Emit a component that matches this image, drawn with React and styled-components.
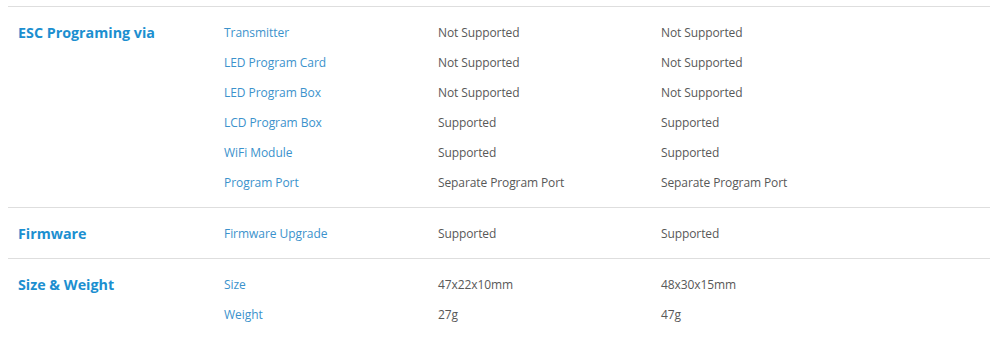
import React from 'react';
import styled, { createGlobalStyle } from 'styled-components';

const GlobalStyle = createGlobalStyle`
  body {
    margin: 0;
    background: #fff;
    font-family: "Open Sans", "Noto Sans", Arial, sans-serif;
  }
`;

const Table = styled.div`
  width: 982px;
  margin: 6px 0 0 8px;
`;

const Section = styled.div`
  display: grid;
  grid-template-columns: 206px 214px 223px 1fr;
  grid-auto-rows: 30px;
  align-items: center;
  padding: 10px 0 10px 10px;
  border-top: 1px solid #dedede;
`;

const Heading = styled.div`
  grid-column: 1;
  grid-row: 1;
  color: #1c8fd0;
  font-size: 14.3px;
  font-weight: 700;
`;

const Label = styled.div`
  grid-column: 2;
  color: #3b92cc;
  font-size: 12px;
  letter-spacing: -0.05px;
`;

const Value = styled.div`
  grid-column: ${(p) => p.col};
  color: #585858;
  font-size: 12px;
  letter-spacing: -0.1px;
`;

const sections = [
  {
    title: 'ESC Programing via',
    rows: [
      ['Transmitter', 'Not Supported', 'Not Supported'],
      ['LED Program Card', 'Not Supported', 'Not Supported'],
      ['LED Program Box', 'Not Supported', 'Not Supported'],
      ['LCD Program Box', 'Supported', 'Supported'],
      ['WiFi Module', 'Supported', 'Supported'],
      ['Program Port', 'Separate Program Port', 'Separate Program Port'],
    ],
  },
  {
    title: 'Firmware',
    rows: [['Firmware Upgrade', 'Supported', 'Supported']],
  },
  {
    title: 'Size & Weight',
    rows: [
      ['Size', '47x22x10mm', '48x30x15mm'],
      ['Weight', '27g', '47g'],
    ],
  },
];

const App = () => (
  <>
    <GlobalStyle />
    <Table>
      {sections.map((s) => (
        <Section key={s.title}>
          <Heading>{s.title}</Heading>
          {s.rows.map(([label, a, b]) => (
            <React.Fragment key={label}>
              <Label>{label}</Label>
              <Value col={3}>{a}</Value>
              <Value col={4}>{b}</Value>
            </React.Fragment>
          ))}
        </Section>
      ))}
    </Table>
  </>
);

export default App;
